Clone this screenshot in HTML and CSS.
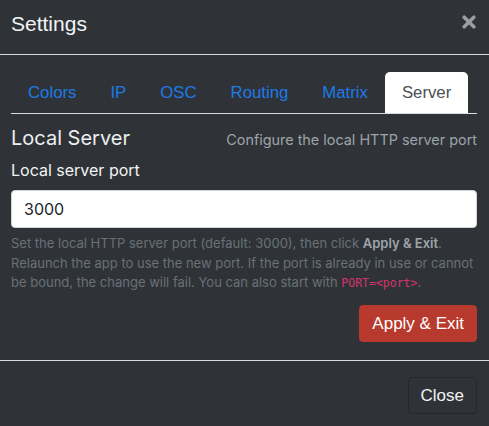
FILE: index.html
```html
<!DOCTYPE html>
<html>
<head>
<meta charset="utf-8">
<link rel="stylesheet" href="styles.css">
</head>
<body>
<div class="modal">
  <div class="modal-header">
    <h1 class="modal-title">Settings</h1>
    <button class="close-x" aria-label="Close">
      <svg width="14" height="14" viewBox="0 0 14 14"><path d="M2.2 2.2 L11.8 11.8 M11.8 2.2 L2.2 11.8" stroke="#9a9da1" stroke-width="3.6" stroke-linecap="round"/></svg>
    </button>
  </div>
  <div class="modal-body">
    <ul class="tabs">
      <li class="tab">Colors</li>
      <li class="tab">IP</li>
      <li class="tab">OSC</li>
      <li class="tab">Routing</li>
      <li class="tab">Matrix</li>
      <li class="tab active">Server</li>
    </ul>
    <div class="pane">
      <div class="pane-head">
        <h2 class="pane-title">Local Server</h2>
        <span class="pane-sub">Configure the local HTTP server port</span>
      </div>
      <label class="field-label">Local server port</label>
      <input class="field" type="text" value="3000">
      <p class="help">Set the local HTTP server port (default: 3000), then click <b>Apply &amp; Exit</b>. Relaunch the app to use the new port. If the port is already in use or cannot be bound, the change will fail. You can also start with <code>PORT=&lt;port&gt;</code>.</p>
      <div class="actions">
        <button class="btn btn-danger">Apply &amp; Exit</button>
      </div>
    </div>
  </div>
  <div class="modal-footer">
    <button class="btn btn-dark">Close</button>
  </div>
</div>
</body>
</html>
```
FILE: styles.css
```css
html, body {
  margin: 0;
  padding: 0;
  background: #2f3337;
}
.modal {
  width: 489px;
  height: 426px;
  background: #2f3337;
  color: #e9ecef;
  font-family: "Liberation Sans", Arial, sans-serif;
  display: flex;
  flex-direction: column;
  overflow: hidden;
}
.modal-header {
  display: flex;
  align-items: center;
  justify-content: space-between;
  padding: 0 12px 0 11px;
  height: 54px;
  border-bottom: 1px solid #d9dcdf;
}
.modal-title {
  margin: 0;
  font-size: 21px;
  font-weight: 400;
  color: #f1f3f5;
  line-height: 1;
  padding-bottom: 7px;
}
.close-x {
  background: none;
  border: 0;
  padding: 0;
  width: 14px;
  height: 14px;
  margin-right: 1px;
  margin-bottom: 10px;
  display: flex;
}
.modal-body {
  padding: 17px 12px 0 11px;
}
.tabs {
  list-style: none;
  margin: 0;
  padding: 0;
  display: flex;
  border-bottom: 1px solid #d9dcdf;
  width: 466px;
}
.tab {
  font-size: 16.75px;
  line-height: 24px;
  padding: 8px 16px;
  border: 1px solid transparent;
  border-bottom: 0;
  color: #1d7ae8;
  border-radius: 5px 5px 0 0;
}
.tab.active {
  background: #ffffff;
  color: #495057;
}
.pane {
  font-family: Inter, "Noto Sans", sans-serif;
  padding-top: 10px;
}
.pane-head {
  display: flex;
  justify-content: space-between;
  align-items: baseline;
}
.pane-title {
  margin: 0;
  font-size: 20px;
  font-weight: 400;
  color: #eceef0;
  line-height: 28px;
}
.pane-sub {
  font-size: 14.4px;
  color: #9da3a9;
}
.field-label {
  display: block;
  font-size: 16px;
  color: #f1f3f5;
  margin-top: 7px;
  line-height: 22px;
}
.field {
  display: block;
  box-sizing: border-box;
  width: 466px;
  height: 38px;
  margin-top: 9px;
  padding: 0 12px;
  border: 1px solid #ced4da;
  border-radius: 4px;
  background: #fff;
  font-family: Inter, "Noto Sans", sans-serif;
  font-size: 16px;
  color: #212529;
}
.help {
  margin: 6px 0 0;
  font-size: 13px;
  line-height: 19.5px;
  color: #6a7077;
}
.help b {
  color: #9ea4aa;
  font-weight: 600;
}
.help code {
  font-family: "DejaVu Sans Mono", "Liberation Mono", monospace;
  font-size: 11.5px;
  line-height: 1;
  color: #d6336c;
}
.actions {
  display: flex;
  justify-content: flex-end;
  margin-top: 12px;
}
.btn {
  font-family: "Liberation Sans", Arial, sans-serif;
  font-size: 17px;
  line-height: 23px;
  padding: 6px 12px;
  border-radius: 4px;
  border: 1px solid transparent;
  color: #fff;
}
.btn-danger {
  background: #b8392d;
  border-color: #b8392d;
}
.modal-footer {
  margin-top: auto;
  border-top: 1px solid #d9dcdf;
  display: flex;
  justify-content: flex-end;
  padding: 16px 12px 12px;
}
.btn-dark {
  background: transparent;
  border-color: #24282c;
  color: #f1f3f5;
}
```
